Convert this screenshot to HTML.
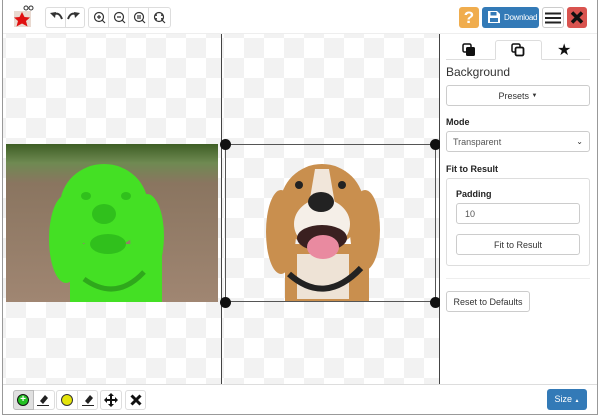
<!DOCTYPE html>
<html><head><style>
*{box-sizing:border-box;margin:0;padding:0}
body{width:600px;height:418px;background:#fff;font-family:"Liberation Sans",sans-serif;position:relative;overflow:hidden;font-size:12px;color:#333}
.abs{position:absolute}
.chk{background-color:#fff;background-image:conic-gradient(#f2f2f2 25%,#fff 25% 50%,#f2f2f2 50% 75%,#fff 75%);background-size:40px 40px}
.btn{position:absolute;border:1px solid #ddd;border-radius:3px;background:#fff;display:flex;align-items:center;justify-content:center}
.pbtn{position:absolute;border:1px solid #ccc;border-radius:3px;background:#fff;display:flex;align-items:center;justify-content:center;font-size:9px;color:#333}
.lbl{position:absolute;font-size:9px;font-weight:bold;color:#222}
</style></head><body>
<div class="abs" style="left:2px;top:0;width:596px;height:415px;border-left:1px solid #999;border-right:1px solid #999;border-bottom:1px solid #999"></div>
<div class="abs" style="left:3px;top:0;width:594px;height:34px;background:#fff;border-bottom:1px solid #eee"></div>
<svg class="abs" style="left:12px;top:5px" width="22" height="24" viewBox="0 0 22 24">
<rect x="2" y="6" width="17" height="16" fill="#e9d9d0"/>
<polygon points="10,7 12.5,12 18,12.5 14,16 15.5,21.5 10,18.5 4.5,21.5 6,16 2,12.5 7.5,12" fill="#e01010"/>
<circle cx="14" cy="3" r="2" fill="none" stroke="#333"/><circle cx="19" cy="3" r="2" fill="none" stroke="#333"/>
</svg>
<div class="btn" style="left:45px;top:7px;width:40px;height:21px"></div>
<div class="abs" style="left:65px;top:8px;width:1px;height:19px;background:#ddd"></div>
<svg class="abs" style="left:49px;top:10px" width="32" height="15" viewBox="0 0 32 15">
<path d="M4 5 Q10 1 13 9" fill="none" stroke="#333" stroke-width="2"/><path d="M1 3 L6 8 L7 2Z" fill="#333"/>
<path d="M28 5 Q22 1 19 9" fill="none" stroke="#333" stroke-width="2"/><path d="M31 3 L26 8 L25 2Z" fill="#333"/>
</svg>
<div class="btn" style="left:88px;top:7px;width:83px;height:21px"></div>
<svg class="abs" style="left:88px;top:7px" width="83" height="21" viewBox="0 0 83 21">
<g fill="none" stroke="#333" stroke-width="1.2">
<circle cx="11" cy="10" r="4.5"/><path d="M14 13l3 3M9 10h4M11 8v4"/>
<circle cx="31" cy="10" r="4.5"/><path d="M34 13l3 3M29 10h4"/>
<circle cx="51" cy="10" r="4.5"/><path d="M54 13l3 3M50 8v4M52 8v4"/>
<circle cx="71" cy="10" r="4.5"/><path d="M74 13l3 3M69 8h-1v1M73 8h1v1M69 12h-1v-1M73 12h1v-1"/>
</g>
<path d="M20.5 1v19M40.5 1v19M60.5 1v19" stroke="#ddd"/>
</svg>
<div class="abs" style="left:459px;top:7px;width:20px;height:21px;background:#f0ad4e;border-radius:3px;color:#fff;font-weight:bold;font-size:17px;text-align:center;line-height:21px">?</div>
<div class="abs" style="left:482px;top:7px;width:57px;height:21px;background:#337ab7;border-radius:3px;color:#fff;font-size:8px;line-height:21px;padding-left:22px;letter-spacing:-0.3px">Download</div>
<svg class="abs" style="left:488px;top:11px" width="12" height="12" viewBox="0 0 12 12"><path d="M0 0h9l3 3v9h-12z" fill="#fff"/><rect x="2.5" y="1" width="6" height="3.5" fill="#337ab7"/><rect x="2" y="7" width="8" height="4" fill="#337ab7"/></svg>
<div class="btn" style="left:542px;top:7px;width:22px;height:21px;border-color:#ccc"><svg width="16" height="12"><path d="M0 1.5h16M0 6h16M0 10.5h16" stroke="#222" stroke-width="2"/></svg></div>
<div class="abs" style="left:567px;top:7px;width:20px;height:21px;background:#d9534f;border-radius:3px"><svg width="20" height="21"><path d="M5 5.5l10 10M15 5.5l-10 10" stroke="#111" stroke-width="3.5"/></svg></div>
<div class="abs chk" style="left:3px;top:34px;width:218px;height:350px;background-position:3px 4px"></div>
<div class="abs" style="left:221px;top:34px;width:1px;height:350px;background:#444"></div>
<div class="abs chk" style="left:222px;top:34px;width:217px;height:350px;background-position:2px 4px"></div>
<div class="abs" style="left:439px;top:34px;width:1px;height:350px;background:#444"></div>
<svg class="abs" style="left:6px;top:144px" width="212" height="158" viewBox="0 0 212 158">
<defs><linearGradient id="bg" x1="0" y1="0" x2="0" y2="1"><stop offset="0" stop-color="#3e5e25"/><stop offset="0.12" stop-color="#6f8a52"/><stop offset="0.25" stop-color="#8a7560"/><stop offset="1" stop-color="#a08672"/></linearGradient></defs>
<rect width="212" height="158" fill="url(#bg)"/>
<g fill="#44e024">
<ellipse cx="98" cy="62" rx="44" ry="42"/>
<ellipse cx="60" cy="95" rx="17" ry="44"/>
<ellipse cx="141" cy="92" rx="17" ry="42"/>
<rect x="64" y="100" width="92" height="58"/>
</g>
<g fill="#30c01c">
<ellipse cx="98" cy="70" rx="12" ry="10"/><ellipse cx="102" cy="100" rx="18" ry="10"/>
<ellipse cx="80" cy="52" rx="5" ry="4"/><ellipse cx="120" cy="52" rx="5" ry="4"/>
</g>
<path d="M78 135 Q110 158 138 128" stroke="#2fa81c" stroke-width="5" fill="none"/>
</svg>
<svg class="abs" style="left:225px;top:144px" width="211" height="158" viewBox="0 0 211 158">
<g fill="#c98f4e">
<ellipse cx="97" cy="62" rx="42" ry="42"/>
<ellipse cx="56" cy="88" rx="15" ry="42"/>
<ellipse cx="140" cy="86" rx="15" ry="40"/>
<rect x="60" y="100" width="84" height="58"/>
</g>
<path d="M90 25 L104 25 L110 60 L84 60Z" fill="#f1e6da"/>
<ellipse cx="97" cy="80" rx="28" ry="25" fill="#f5efe8"/>
<rect x="72" y="110" width="52" height="45" fill="#eee3d6"/>
<path d="M64 130 Q100 162 136 124" stroke="#222" stroke-width="6" fill="none"/>
<circle cx="74" cy="41" r="4" fill="#222"/><circle cx="117" cy="41" r="4" fill="#222"/>
<ellipse cx="96" cy="58" rx="13" ry="10" fill="#222"/>
<ellipse cx="97" cy="94" rx="25" ry="13" fill="#3a2020"/>
<ellipse cx="98" cy="103" rx="16" ry="12" fill="#e98aa0"/>
<rect x="0.5" y="0.5" width="210" height="157" fill="none" stroke="#555"/>
</svg>
<div class="abs" style="left:220px;top:139px;width:11px;height:11px;border-radius:50%;background:#111"></div>
<div class="abs" style="left:430px;top:139px;width:11px;height:11px;border-radius:50%;background:#111"></div>
<div class="abs" style="left:220px;top:297px;width:11px;height:11px;border-radius:50%;background:#111"></div>
<div class="abs" style="left:430px;top:297px;width:11px;height:11px;border-radius:50%;background:#111"></div>
<div class="abs" style="left:440px;top:34px;width:157px;height:350px;background:#fff"></div>
<div class="abs" style="left:446px;top:59px;width:144px;height:1px;background:#ddd"></div>
<div class="abs" style="left:495px;top:40px;width:47px;height:20px;border:1px solid #ddd;border-bottom-color:#fff;border-radius:3px 3px 0 0;background:#fff"></div>
<svg class="abs" style="left:462px;top:43px" width="14" height="14"><rect x="1" y="1" width="8" height="8" rx="1.5" fill="none" stroke="#111" stroke-width="1.5"/><rect x="4" y="4" width="9" height="9" rx="1.5" fill="#111"/></svg>
<svg class="abs" style="left:511px;top:43px" width="14" height="14"><rect x="1" y="1" width="8" height="8" rx="1.5" fill="none" stroke="#111" stroke-width="1.5"/><rect x="4.5" y="4.5" width="8" height="8" rx="1.5" fill="#fff" stroke="#111" stroke-width="1.8"/></svg>
<div class="abs" style="left:557px;top:40px;font-size:16px;color:#111">★</div>
<div class="abs" style="left:446px;top:65px;font-size:12px;color:#333">Background</div>
<div class="pbtn" style="left:446px;top:85px;width:144px;height:21px">Presets&nbsp;<span style="font-size:6px">▼</span></div>
<div class="lbl" style="left:446px;top:117px">Mode</div>
<div class="pbtn" style="left:446px;top:131px;width:144px;height:21px;justify-content:space-between;padding:0 6px;color:#555">Transparent<span style="font-size:8px;color:#333">⌄</span></div>
<div class="lbl" style="left:446px;top:164px">Fit to Result</div>
<div class="abs" style="left:446px;top:178px;width:144px;height:88px;border:1px solid #ddd;border-radius:3px"></div>
<div class="lbl" style="left:456px;top:189px">Padding</div>
<div class="pbtn" style="left:456px;top:203px;width:124px;height:21px;justify-content:flex-start;padding-left:8px;color:#555">10</div>
<div class="pbtn" style="left:456px;top:234px;width:124px;height:21px">Fit to Result</div>
<div class="abs" style="left:446px;top:278px;width:144px;height:1px;background:#eee"></div>
<div class="pbtn" style="left:446px;top:291px;width:84px;height:21px">Reset to Defaults</div>
<div class="abs" style="left:3px;top:384px;width:594px;height:30px;background:#fff;border-top:1px solid #ddd"></div>
<div class="btn" style="left:13px;top:390px;width:42px;height:20px;background:#fff"></div>
<div class="abs" style="left:13px;top:390px;width:21px;height:20px;background:#e0e0e0;border:1px solid #bbb;border-radius:3px 0 0 3px"></div>
<div class="abs" style="left:17px;top:394px;width:12px;height:12px;border-radius:50%;background:#22c022;border:1.5px solid #111;color:#fff;font-size:10px;font-weight:bold;line-height:9px;text-align:center">+</div>
<svg class="abs" style="left:36px;top:393px" width="14" height="14"><path d="M4 8l5-6 3 3-5 6z" fill="#222"/><path d="M1 12.5h12" stroke="#222"/></svg>
<div class="btn" style="left:56px;top:390px;width:42px;height:20px"></div>
<div class="abs" style="left:77px;top:391px;width:1px;height:18px;background:#ddd"></div>
<div class="abs" style="left:61px;top:394px;width:12px;height:12px;border-radius:50%;background:#e4e40a;border:1px solid #333"></div>
<svg class="abs" style="left:81px;top:393px" width="14" height="14"><path d="M4 8l5-6 3 3-5 6z" fill="#222"/><path d="M1 12.5h12" stroke="#222"/></svg>
<div class="btn" style="left:100px;top:390px;width:22px;height:20px"><svg width="14" height="14" viewBox="0 0 14 14"><path d="M7 0l3 3H4zM7 14l3-3H4zM0 7l3-3v6zM14 7l-3-3v6z" fill="#111"/><path d="M7 2v10M2 7h10" stroke="#111" stroke-width="2"/></svg></div>
<div class="btn" style="left:125px;top:390px;width:21px;height:20px"><svg width="12" height="12"><path d="M1.5 1.5l9 9M10.5 1.5l-9 9" stroke="#111" stroke-width="3"/></svg></div>
<div class="abs" style="left:547px;top:389px;width:40px;height:21px;background:#337ab7;border-radius:3px;color:#fff;font-size:9px;line-height:21px;text-align:center">Size <span style="font-size:5px">▲</span></div>
</body></html>
